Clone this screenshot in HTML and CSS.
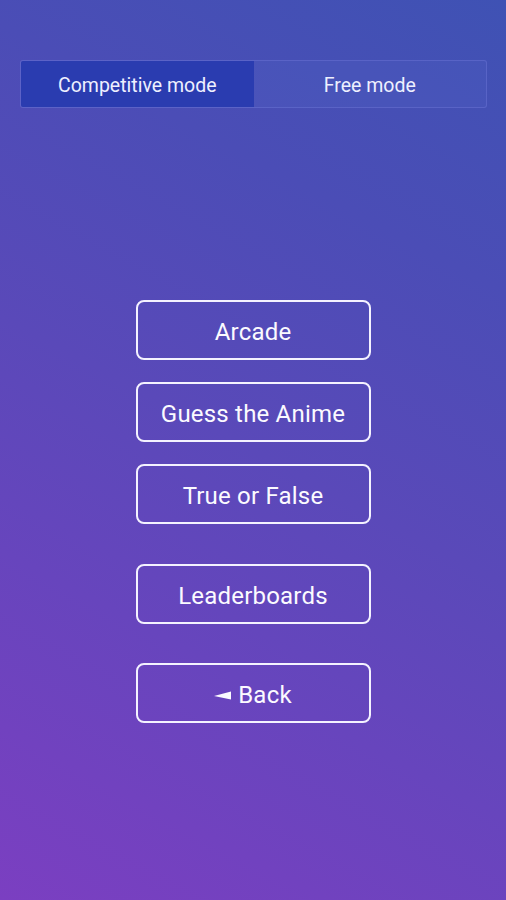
FILE: index.html
```html
<!DOCTYPE html>
<html>
<head>
<meta charset="utf-8">
<link rel="stylesheet" href="styles.css">
</head>
<body>
<div class="screen">
  <div class="tabs">
    <div class="tab active">Competitive mode</div>
    <div class="tab">Free mode</div>
  </div>
  <div class="menu">
    <div class="group">
      <div class="btn">Arcade</div>
      <div class="btn">Guess the Anime</div>
      <div class="btn">True or False</div>
    </div>
    <div class="btn">Leaderboards</div>
    <div class="btn back"><svg class="arrow" width="17" height="9" viewBox="0 0 17 9"><polygon points="0,5 17,0.5 17,8.5" fill="#fbfaff"/></svg><span>Back</span></div>
  </div>
</div>
</body>
</html>
```
FILE: styles.css
```css
html, body {
  margin: 0;
  padding: 0;
}
body {
  font-family: Roboto, "Liberation Sans", sans-serif;
  color: #fff;
}
.screen {
  width: 506px;
  height: 900px;
  box-sizing: border-box;
  padding-top: 60px;
  background: linear-gradient(28deg, #7b3fc1 0%, #6745bd 30%, #5a49b9 50%, #4b4db6 75%, #3f52b4 100%);
  display: flex;
  flex-direction: column;
  align-items: center;
}
.tabs {
  width: 467px;
  height: 48px;
  box-sizing: border-box;
  display: flex;
  border: 1px solid rgba(110, 120, 215, 0.45);
  border-radius: 3px;
  background: rgba(80, 95, 195, 0.3);
  overflow: hidden;
  margin-left: 1px;
}
.tab {
  flex: 1;
  display: flex;
  align-items: center;
  justify-content: center;
  font-size: 19.5px;
  color: #eef0ff;
  padding-top: 2px;
}
.tab.active {
  background: #2a3cb0;
}
.menu {
  margin-top: 192px;
  display: flex;
  flex-direction: column;
  align-items: center;
  gap: 39px;
}
.group {
  display: flex;
  flex-direction: column;
  gap: 22px;
  margin-bottom: 1px;
}
.btn {
  width: 235px;
  height: 60px;
  box-sizing: border-box;
  border: 2px solid #f4f2ff;
  border-radius: 8px;
  display: flex;
  align-items: center;
  justify-content: center;
  font-size: 24px;
  color: #fbfaff;
  letter-spacing: 0.2px;
  padding-top: 3px;
}
.arrow {
  margin-right: 7px;
  margin-top: 1px;
}
```
